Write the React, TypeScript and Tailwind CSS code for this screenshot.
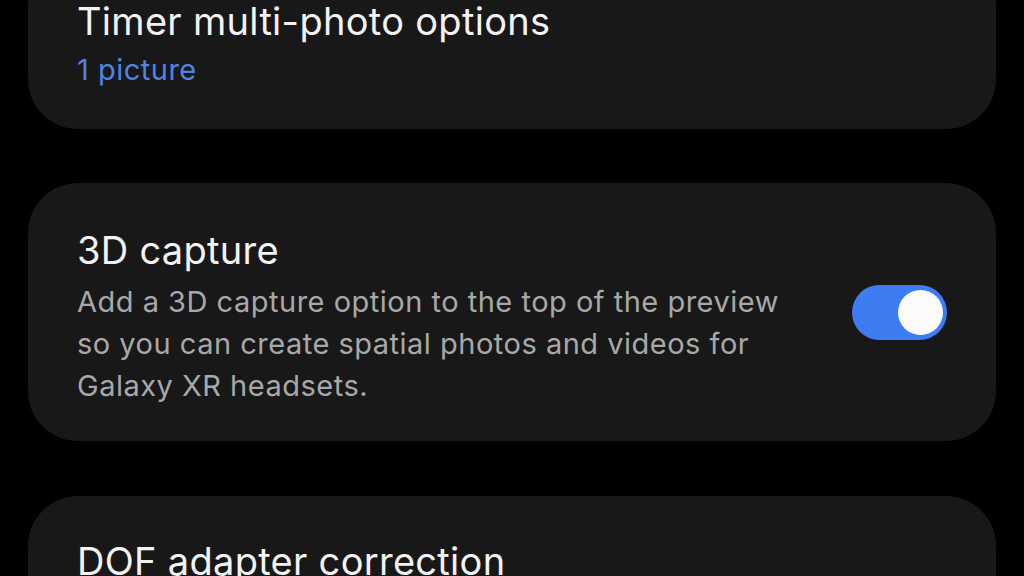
export default function App() {
  const font = { fontFamily: 'Inter, "Noto Sans", sans-serif' };
  return (
    <div className="w-[1024px] h-[576px] overflow-hidden bg-black" style={font}>
      <div className="flex flex-col gap-[54px] px-[28px] -mt-[46px]">
        <div className="rounded-[50px] bg-[#181818] pl-[49px] pr-[48px] pt-[44px] pb-[38px]">
          <div className="text-[38px] leading-[46px] tracking-[0.3px] text-[#f3f3f3] whitespace-nowrap">Timer multi-photo options</div>
          <div className="text-[29px] leading-[42px] tracking-[0.5px] text-[#4f84e4] mt-[5px]">1 picture</div>
        </div>
        <div className="rounded-[50px] bg-[#181818] pl-[49px] pr-[49px] flex items-center">
          <div className="flex-1 flex flex-col pt-[44px] pb-[34px]">
            <div className="text-[38px] leading-[46px] tracking-[0.3px] text-[#f3f3f3]">3D capture</div>
            <div className="text-[29px] leading-[42px] tracking-[0.5px] text-[#a8a8a8] mt-[8px] whitespace-nowrap">
              <div>Add a 3D capture option to the top of the preview</div>
              <div>so you can create spatial photos and videos for</div>
              <div>Galaxy XR headsets.</div>
            </div>
          </div>
          <div className="w-[95px] h-[55px] rounded-full bg-[#3e7cf1] flex items-center justify-end pr-[4px]">
            <div className="w-[45px] h-[45px] rounded-full bg-[#fbfbfb]" />
          </div>
        </div>
        <div className="rounded-[50px] bg-[#181818] pl-[49px] pr-[48px] pt-[42px] h-[200px] mt-[1px]">
          <div className="text-[38px] leading-[46px] tracking-[0.3px] text-[#f3f3f3]">DOF adapter correction</div>
        </div>
      </div>
    </div>
  );
}
